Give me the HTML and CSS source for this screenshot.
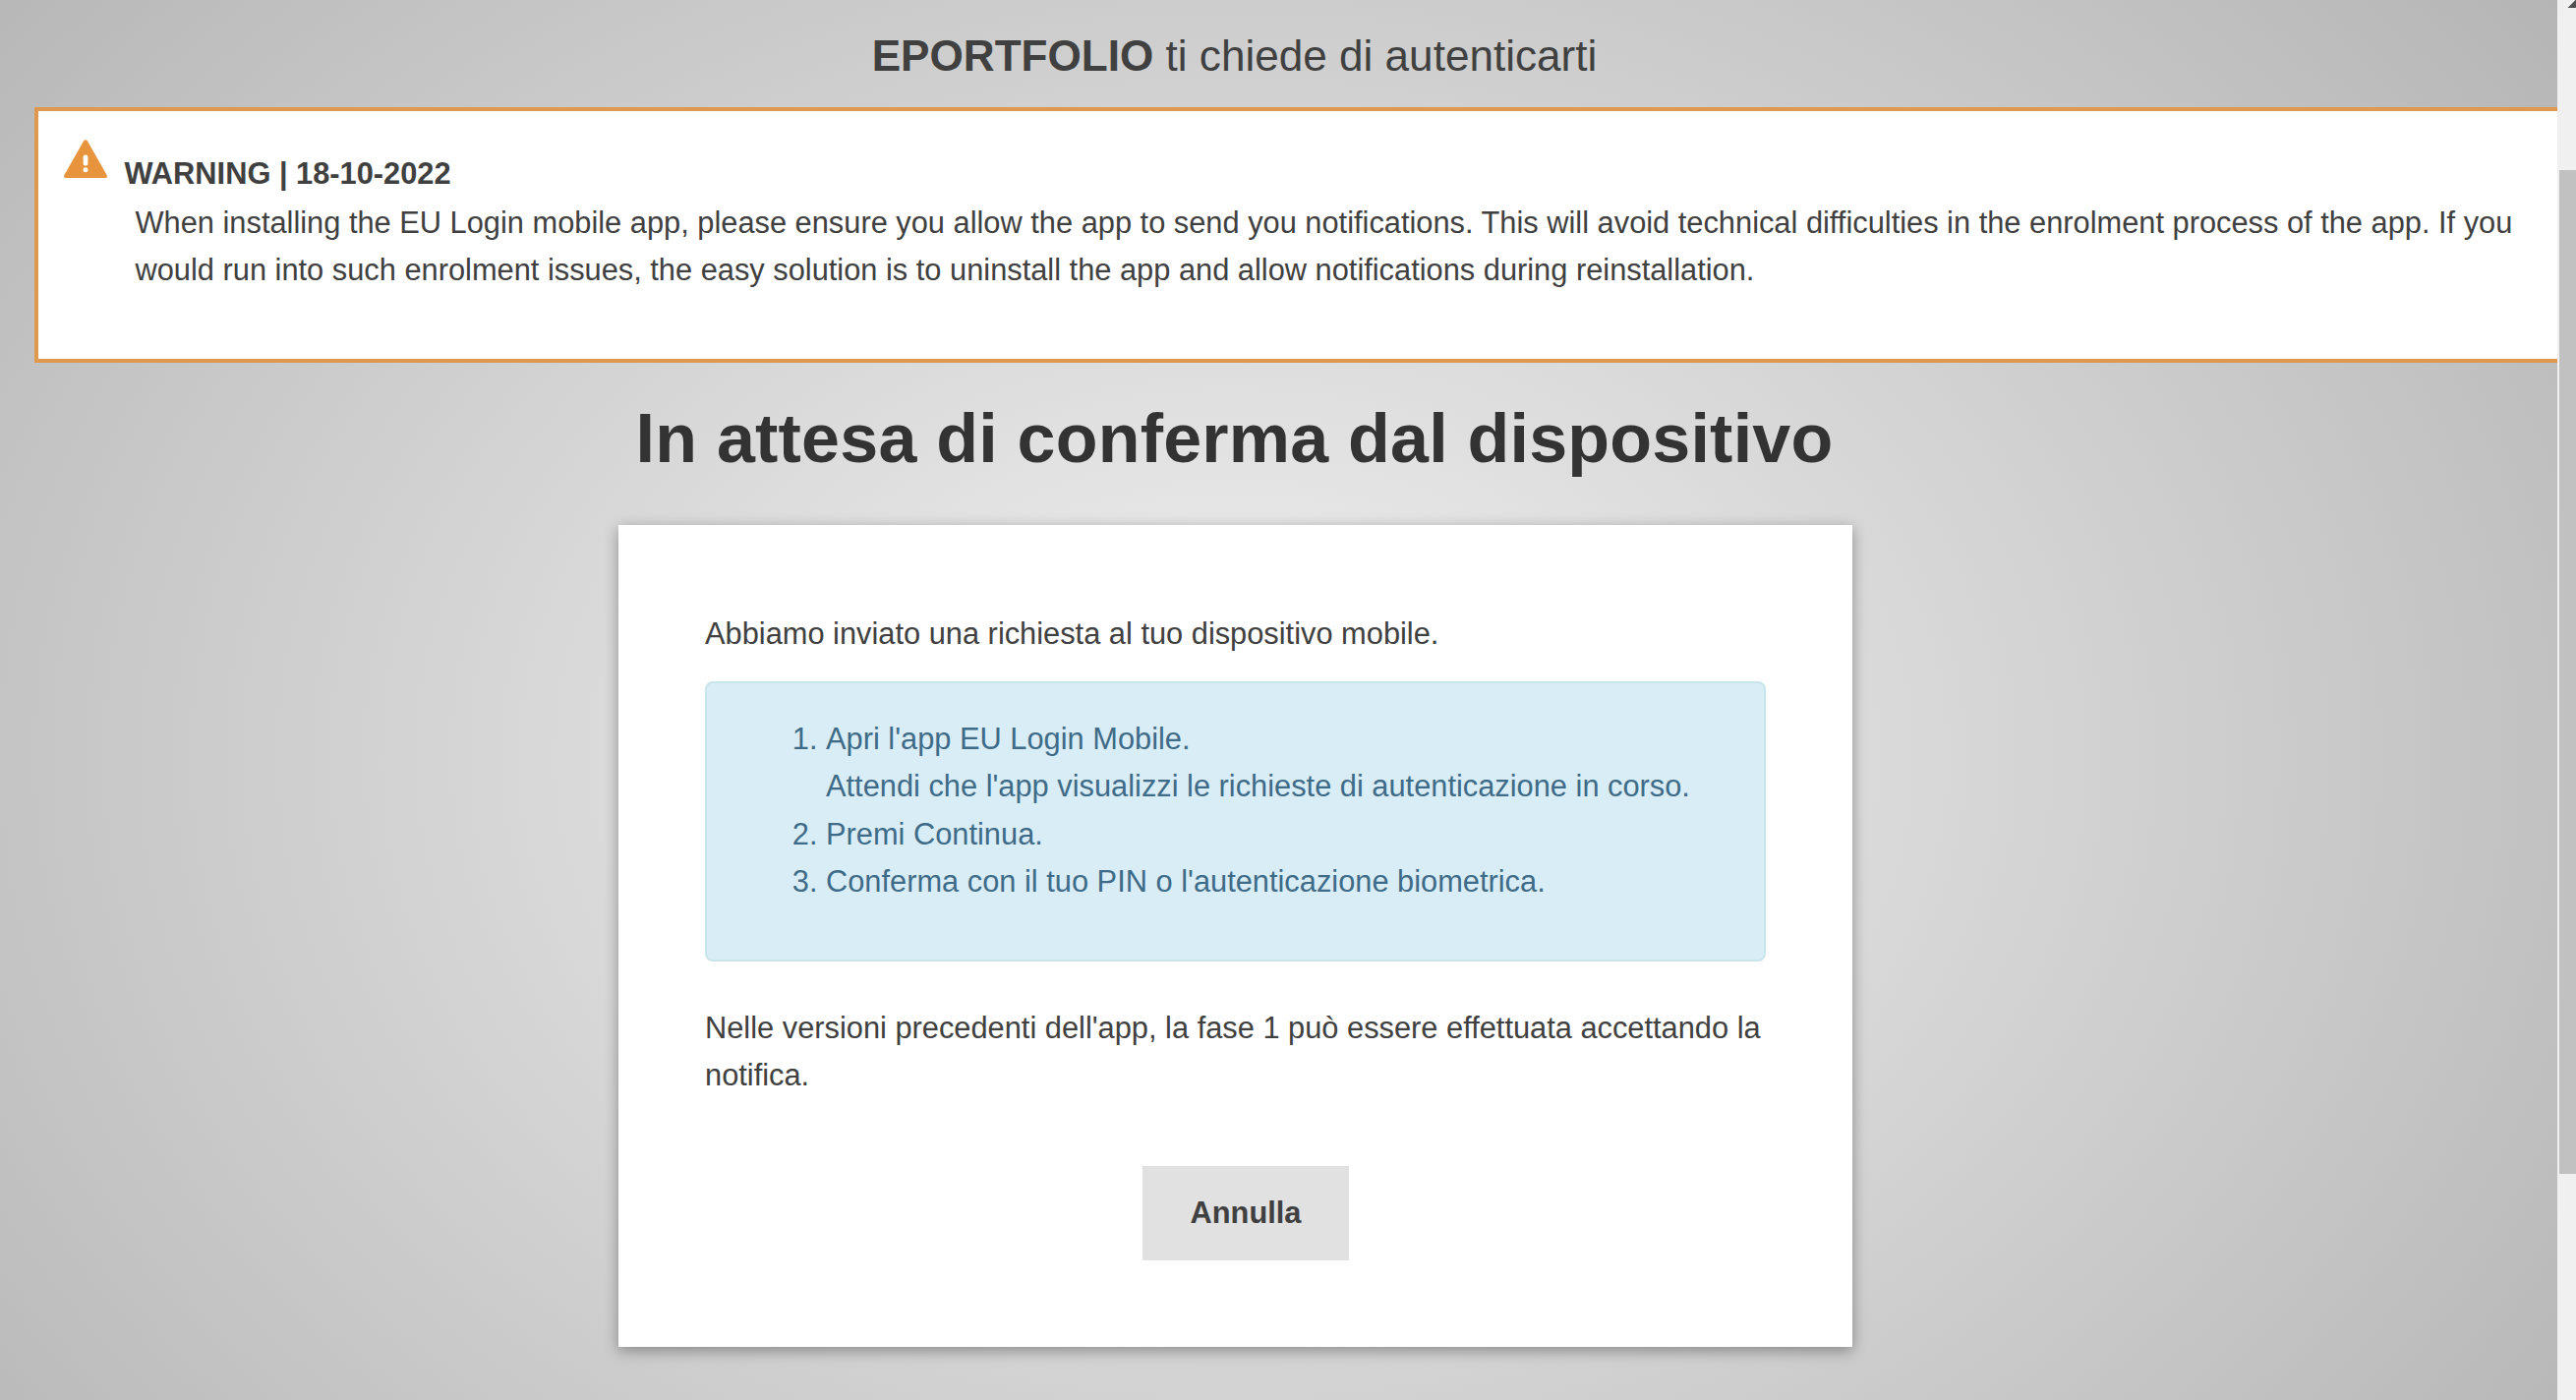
FILE: index.html
```html
<!DOCTYPE html>
<html lang="it">
<head>
    <meta charset="UTF-8">
    <title>EU Login</title>
    <link rel="stylesheet" href="styles.css">
</head>
<body>
<div id="page">
    <div class="service"><strong>EPORTFOLIO</strong> ti chiede di autenticarti</div>
    <div class="warning">
        <svg class="icon" viewBox="0 0 46 40"><path d="M21 1.6Q23-1.2 25 1.6L44.6 36Q45.600 39 43 39H3Q0.400 39 1.400 36Z" fill="#e8943c"/><rect x="20.600" y="15.500" width="4.800" height="11" rx="2" fill="#fff"/><circle cx="23" cy="30.700" r="2.500" fill="#fff"/></svg>
        <div class="message">
            <h3>WARNING | 18-10-2022</h3>
            <p>When installing the EU Login mobile app, please ensure you allow the app to send you notifications. This will avoid technical difficulties in the enrolment process of the app. If you would run into such enrolment issues, the easy solution is to uninstall the app and allow notifications during reinstallation.</p>
        </div>
    </div>
    <h1>In attesa di conferma dal dispositivo</h1>
    <div class="card">
        <p>Abbiamo inviato una richiesta al tuo dispositivo mobile.</p>
        <div class="info">
            <ol>
                <li>Apri l'app EU Login Mobile.<br>Attendi che l'app visualizzi le richieste di autenticazione in corso.</li>
                <li>Premi Continua.</li>
                <li>Conferma con il tuo PIN o l'autenticazione biometrica.</li>
            </ol>
        </div>
        <p>Nelle versioni precedenti dell'app, la fase 1 può essere effettuata accettando la notifica.</p>
        <button class="cancel" type="button">Annulla</button>
    </div>
</div>
<div id="scroll">
    <svg class="up" viewBox="0 0 18 8"><path d="M9.500 8L18 -0.500V8Z" fill="#505050"/></svg>
    <div class="thumb"></div>
</div>
</body>
</html>
```
FILE: styles.css
```css
html,body{overflow:hidden;}
body,h1,h3,p,ol{margin:0;padding:0;}
body{display:flex;width:2620px;height:1424px;font:30.8px/48.2px "Liberation Sans",Arial,sans-serif;color:#404040;}
#page{width:2601px;height:1424px;overflow:hidden;background:radial-gradient(1690px 1270px at 1255px 770px,#f1f1f1 0%,#b5b5b5 100%);}
.service{width:2511px;height:76px;padding-top:33px;font-size:44.1px;line-height:48px;text-align:center;}
.warning{display:flex;box-sizing:border-box;width:2630px;height:260px;margin-left:35px;border:4px solid #de994f;background:#fff;}
.warning .icon{width:46px;height:40px;margin:29px 0 0 25px;}
.message{width:2435px;padding:40px 0 0 16.5px;}
.message h3{font-size:30.8px;line-height:48px;}
.message p{padding:2px 0 0 11px;}
h1{width:2511px;margin-top:33px;font-size:70px;line-height:88px;letter-spacing:.22px;color:#333;text-align:center;}
.card{box-sizing:border-box;width:1255px;height:836px;margin:44px 0 0 629px;padding:87px 88px 0;background:#fff;box-shadow:0 4px 14px rgba(0,0,0,.35);}
.info{box-sizing:border-box;width:1079px;height:285px;margin:24px 0 44px;padding:33px 0 0 121px;border:2px solid #c8e5ec;border-radius:8px;background:#d9edf7;color:#3e6b87;}
.cancel{display:block;width:210px;height:96px;margin:67px 0 0 445px;padding:0;border:0;background:#e1e1e1;color:#404040;font:bold 30.8px/96px "Liberation Sans",Arial,sans-serif;}
#scroll{width:19px;height:1424px;background:#f0f0f0;}
#scroll .up{display:block;width:18px;height:8px;margin-left:1px;}
.thumb{width:17px;height:1021px;margin:165px 0 0 2px;background:#c1c1c1;}
```
